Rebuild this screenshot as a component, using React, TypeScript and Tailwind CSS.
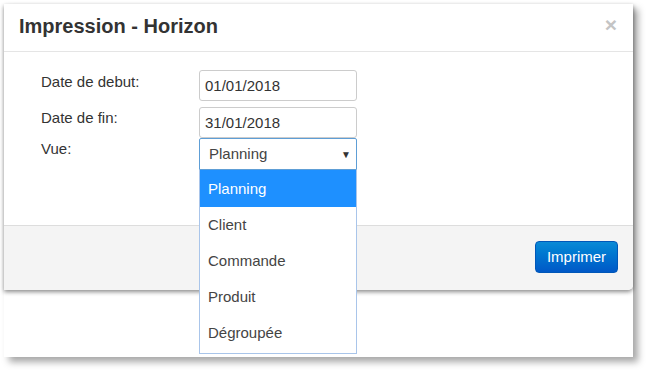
const options = ["Planning", "Client", "Commande", "Produit", "Dégroupée"];

export default function App() {
  return (
    <div className="w-[647px] h-[371px] bg-white font-['Liberation_Sans',Arial,sans-serif] text-[#333]">
      <div className="relative ml-[4px] pt-[4px]">
        <div className="w-[629px] h-[353px] bg-white shadow-[5px_5px_7px_rgba(0,0,0,0.35)]">
          {/* Modal */}
          <div className="flex flex-col h-[286px] rounded-br-[5px] shadow-[0_2px_4px_rgba(0,0,0,0.45)] bg-white">
            {/* Header */}
            <div className="flex items-center justify-between h-[48px] border-b border-[#e5e5e5] pl-[15px] pr-[16px] pb-[3px]">
              <h1 className="text-[20px] font-bold text-[#333] leading-none">Impression - Horizon</h1>
              <span className="text-[21px] font-bold text-[#c4c4c4] leading-none -mt-[4px]">×</span>
            </div>

            {/* Body */}
            <div className="flex-1 pl-[37px] pt-[18px]">
              <div className="flex">
                <label className="w-[158px] text-[15px] pt-[1px]">Date de debut:</label>
                <div className="w-[158px] h-[31px] border border-[#ccc] rounded-[3px] flex items-center pl-[5px] text-[15px] pt-[1px]">
                  01/01/2018
                </div>
              </div>
              <div className="flex mt-[6px]">
                <label className="w-[158px] text-[15px]">Date de fin:</label>
                <div className="w-[158px] h-[31px] border border-[#ccc] rounded-[3px] flex items-center pl-[5px] text-[15px] pt-[1px]">
                  31/01/2018
                </div>
              </div>
              <div className="flex">
                <label className="w-[158px] text-[15px]">Vue:</label>
                <div className="w-[158px] h-[32px] border border-[#5e9ed6] rounded-t-[2px] flex items-center justify-between pl-[9px] pr-[5px] text-[15px] pt-[1px] text-[#444]">
                  Planning
                  <span className="text-[10px] text-[#333]">▼</span>
                </div>
              </div>
            </div>

            {/* Footer */}
            <div className="h-[65px] bg-[#f4f4f4] border-t border-[#ddd] flex items-start justify-end pr-[15px] pt-[15px] rounded-br-[5px]">
              <button className="w-[83px] h-[32px] rounded-[4px] border border-[#0057b8] bg-gradient-to-b from-[#0a8ad6] to-[#0058c7] text-white text-[15px]">
                Imprimer
              </button>
            </div>
          </div>
        </div>

        {/* Dropdown list */}
        <ul className="absolute left-[195px] top-[170px] w-[158px] bg-white border border-[#a9c5ea] border-t-0 pb-[2px]">
          {options.map((o, i) => (
            <li
              key={o}
              className={
                i === 0
                  ? "h-[37px] flex items-center pl-[8px] pt-[1px] text-[15px] bg-[#1e90ff] text-white"
                  : "h-[36px] flex items-center pl-[8px] pt-[1px] text-[15px] text-[#444]"
              }
            >
              {o}
            </li>
          ))}
        </ul>
      </div>
    </div>
  );
}
